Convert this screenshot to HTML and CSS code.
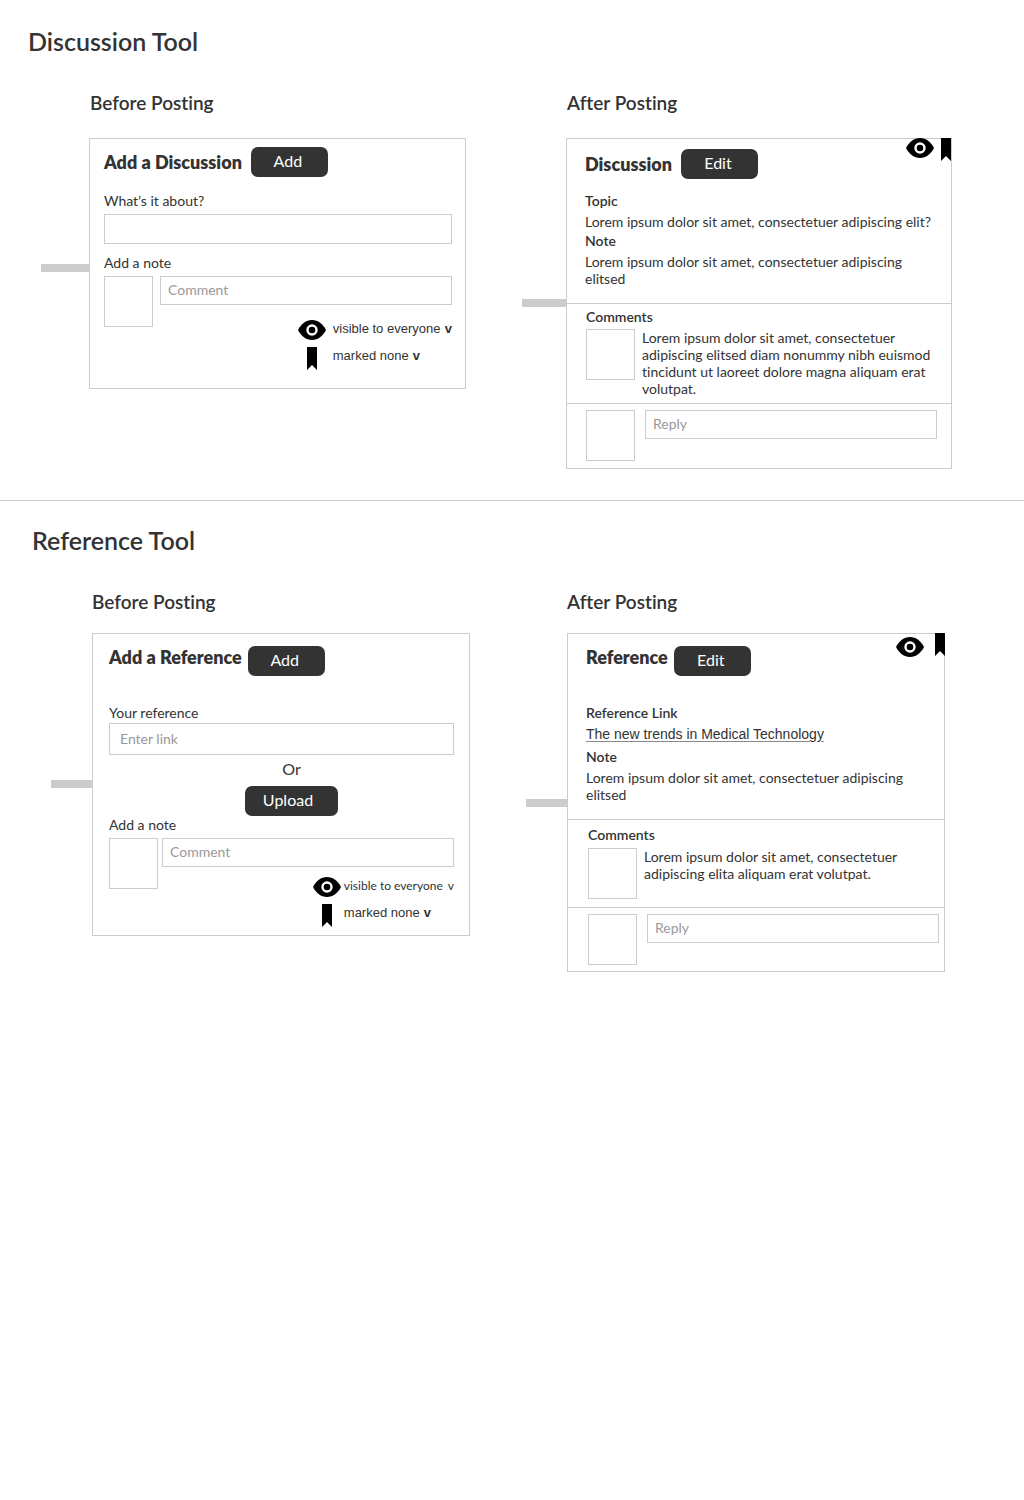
FILE: index.html
```html
<!DOCTYPE html>
<html lang="en">
<head>
<meta charset="utf-8">
<meta name="viewport" content="width=device-width, initial-scale=1">
<title>Discussion and Reference Tools</title>
<link rel="stylesheet" href="styles.css">
</head>
<body>
<svg class="sprite" aria-hidden="true">
  <symbol id="eye" viewBox="0 0 28 20">
    <path d="M0 10C3 4 8 0 14 0s11 4 14 10c-3 6-8 10-14 10S3 16 0 10z"/>
    <circle cx="14" cy="10" r="4.5" fill="none" stroke="#fff" stroke-width="2.4"/>
  </symbol>
  <symbol id="bookmark" viewBox="0 0 10 23">
    <path d="M0 0h10v23l-5-5-5 5z"/>
  </symbol>
</svg>

<section class="tool discussion">
  <h1 class="tool-title">Discussion Tool</h1>
  <div class="columns">
    <div class="column before">
      <h2 class="column-title">Before Posting</h2>
      <div class="thread">
        <div class="connector"></div>
        <form class="panel form-panel">
          <div class="panel-header">
            <h3 class="panel-title">Add a Discussion</h3>
            <button class="button" type="button">Add</button>
          </div>
          <label class="label" for="about">What’s it about?</label>
          <input class="input topic-input" id="about" type="text">
          <label class="label note-label" for="discussion-note">Add a note</label>
          <div class="note-row">
            <div class="avatar"></div>
            <div class="note-body">
              <input class="input" id="discussion-note" type="text" placeholder="Comment">
              <div class="options">
                <svg class="eye"><use href="#eye"/></svg>
                <div class="option">
                  <select class="select" aria-label="Visibility"><option>visible to everyone</option></select>
                  <span class="caret">v</span>
                </div>
                <svg class="bookmark"><use href="#bookmark"/></svg>
                <div class="option">
                  <select class="select" aria-label="Mark"><option>marked none</option></select>
                  <span class="caret">v</span>
                </div>
              </div>
            </div>
          </div>
        </form>
      </div>
    </div>

    <div class="column after">
      <h2 class="column-title">After Posting</h2>
      <div class="thread">
        <div class="connector"></div>
        <article class="panel">
          <div class="badges">
            <svg class="eye"><use href="#eye"/></svg>
            <svg class="bookmark"><use href="#bookmark"/></svg>
          </div>
          <div class="post">
            <div class="panel-header">
              <h3 class="panel-title">Discussion</h3>
              <button class="button" type="button">Edit</button>
            </div>
            <h4 class="term">Topic</h4>
            <p class="text">Lorem ipsum dolor sit amet, consectetuer adipiscing elit?</p>
            <h4 class="term">Note</h4>
            <p class="text">Lorem ipsum dolor sit amet, consectetuer adipiscing elitsed</p>
          </div>
          <div class="comments">
            <h4 class="term">Comments</h4>
            <div class="comment">
              <div class="avatar"></div>
              <p class="text">Lorem ipsum dolor sit amet, consectetuer adipiscing elitsed diam nonummy nibh euismod tincidunt ut laoreet dolore magna aliquam erat volutpat.</p>
            </div>
          </div>
          <div class="reply">
            <div class="avatar"></div>
            <input class="input" type="text" placeholder="Reply" aria-label="Reply">
          </div>
        </article>
      </div>
    </div>
  </div>
</section>

<section class="tool reference">
  <h1 class="tool-title">Reference Tool</h1>
  <div class="columns">
    <div class="column before">
      <h2 class="column-title">Before Posting</h2>
      <div class="thread">
        <div class="connector"></div>
        <form class="panel form-panel">
          <div class="panel-header">
            <h3 class="panel-title">Add a Reference</h3>
            <button class="button" type="button">Add</button>
          </div>
          <label class="label" for="link">Your reference</label>
          <input class="input link-input" id="link" type="text" placeholder="Enter link">
          <div class="upload">
            <span class="or">Or</span>
            <button class="button upload-button" type="button">Upload</button>
          </div>
          <label class="label note-label" for="reference-note">Add a note</label>
          <div class="note-row">
            <div class="avatar"></div>
            <div class="note-body">
              <input class="input" id="reference-note" type="text" placeholder="Comment">
              <div class="options">
                <svg class="eye"><use href="#eye"/></svg>
                <div class="option plain">
                  <select class="select" aria-label="Visibility"><option>visible to everyone</option></select>
                  <span class="caret">v</span>
                </div>
                <svg class="bookmark"><use href="#bookmark"/></svg>
                <div class="option">
                  <select class="select" aria-label="Mark"><option>marked none</option></select>
                  <span class="caret">v</span>
                </div>
              </div>
            </div>
          </div>
        </form>
      </div>
    </div>

    <div class="column after">
      <h2 class="column-title">After Posting</h2>
      <div class="thread">
        <div class="connector"></div>
        <article class="panel">
          <div class="badges">
            <svg class="eye"><use href="#eye"/></svg>
            <svg class="bookmark"><use href="#bookmark"/></svg>
          </div>
          <div class="post">
            <div class="panel-header">
              <h3 class="panel-title">Reference</h3>
              <button class="button" type="button">Edit</button>
            </div>
            <h4 class="term">Reference Link</h4>
            <p class="text"><a class="link" href="#">The new trends in Medical Technology</a></p>
            <h4 class="term">Note</h4>
            <p class="text">Lorem ipsum dolor sit amet, consectetuer adipiscing elitsed</p>
          </div>
          <div class="comments">
            <h4 class="term">Comments</h4>
            <div class="comment">
              <div class="avatar"></div>
              <p class="text">Lorem ipsum dolor sit amet, consectetuer adipiscing elita aliquam erat volutpat.</p>
            </div>
          </div>
          <div class="reply">
            <div class="avatar"></div>
            <input class="input" type="text" placeholder="Reply" aria-label="Reply">
          </div>
        </article>
      </div>
    </div>
  </div>
</section>
</body>
</html>
```
FILE: styles.css
```css
* {
  box-sizing: border-box;
}

body {
  margin: 0;
  background: #fff;
  color: #333;
  font: 14px/17px Lato, "Noto Sans", sans-serif;
  font-variant-ligatures: none;
}

h1, h2, h3, h4, p {
  margin: 0;
}

.sprite {
  position: absolute;
  width: 0;
  height: 0;
}

/* Tool sections */

.discussion {
  padding: 26px 72px 31px 41px;
  border-bottom: 1px solid #ccc;
}

.reference {
  padding: 24px 79px 31px 51px;
}

.tool-title {
  font-size: 25px;
  line-height: 30px;
  font-weight: 600;
}

.discussion .tool-title {
  margin: 0 0 36px -13px;
}

.reference .tool-title {
  margin: 0 0 36px -19px;
}

.columns {
  display: grid;
  gap: 56px;
  align-items: start;
}

.discussion .columns {
  grid-template-columns: minmax(0, 425fr) minmax(0, 430fr);
}

.reference .columns {
  grid-template-columns: minmax(0, 1fr) minmax(0, 1fr);
}

.column {
  --connector: 41px;
}

.discussion .before {
  --connector: 48px;
}

.discussion .after {
  --connector: 44px;
}

.column-title {
  padding-left: var(--connector);
  font-size: 19px;
  line-height: 22px;
  font-weight: 600;
}

.discussion .column-title {
  margin-bottom: 24px;
  padding-left: calc(var(--connector) + 1px);
}

.reference .column-title {
  margin-bottom: 20px;
}

.thread {
  display: flex;
  align-items: flex-start;
}

.connector {
  flex: none;
  width: var(--connector);
  height: 8px;
  background: #ccc;
}

.discussion .before .connector {
  margin-top: 126px;
}

.discussion .after .connector {
  margin-top: 161px;
}

.reference .before .connector {
  margin-top: 147px;
}

.reference .after .connector {
  margin-top: 166px;
}

/* Panels */

.panel {
  position: relative;
  flex: 1;
  min-width: 0;
  border: 1px solid #ccc;
}

.panel-header {
  display: flex;
  align-items: center;
  gap: 9px;
}

.panel-title {
  font-size: 18px;
  line-height: 22px;
  font-weight: 800;
}

.button {
  width: 77px;
  height: 30px;
  padding: 0 3px 2px 0;
  border: 0;
  border-radius: 7px;
  background: #333;
  color: #fff;
  font: 16px/20px Lato, "Noto Sans", sans-serif;
}

.avatar {
  flex: none;
  width: 49px;
  height: 51px;
  border: 1px solid #ccc;
}

.input {
  display: block;
  width: 100%;
  height: 29px;
  padding: 0 7px 2px;
  border: 1px solid #ccc;
  border-radius: 0;
  background: #fff;
  color: #333;
  font: inherit;
}

.input::placeholder {
  color: #999;
  opacity: 1;
}

.eye {
  display: block;
  width: 28px;
  height: 20px;
}

.bookmark {
  display: block;
  width: 10px;
  height: 23px;
}

/* Forms */

.form-panel {
  padding: 8px 13px 18px 14px;
}

.label {
  display: block;
  margin: 15px 0 5px;
}

.note-label {
  margin: 10px 0 5px;
}

.topic-input {
  height: 30px;
}

.note-row {
  display: flex;
  gap: 7px;
}

.note-body {
  flex: 1;
  min-width: 0;
}

.options {
  display: grid;
  grid-template-columns: 28px auto;
  justify-content: end;
  justify-items: center;
  gap: 7px;
  margin-top: 15px;
}

.option {
  display: flex;
  gap: 4px;
  justify-self: start;
  font: 13px/17px "Liberation Sans", Arial, sans-serif;
}

.select {
  height: 17px;
  padding: 0;
  border: 0;
  appearance: none;
  background: none;
  color: inherit;
  font: inherit;
}

.caret {
  font-weight: 700;
}

.plain,
.plain .caret {
  font: 12px/17px Lato, "Noto Sans", sans-serif;
}

.reference .panel-header {
  align-items: flex-start;
  gap: 6px;
}

.reference .form-panel {
  padding: 12px 15px 8px 16px;
}

.reference .label {
  margin: 28px 0 2px;
}

.reference .note-label {
  margin: 0 0 5px;
}

.reference .note-row {
  gap: 4px;
}

.reference .options {
  column-gap: 3px;
  margin-top: 10px;
}

.link-input {
  height: 32px;
  padding: 0 10px 2px;
}

.upload {
  display: flex;
  flex-direction: column;
  align-items: center;
  gap: 7px;
  padding: 4px 0 0 20px;
}

.or {
  font-size: 16px;
  line-height: 20px;
}

.upload-button {
  width: 93px;
  padding-right: 7px;
}

/* Posted panels */

.badges {
  position: absolute;
  top: -1px;
  right: 0;
  display: flex;
  gap: 7px;
}

.reference .badges {
  right: -1px;
  gap: 11px;
}

.reference .badges .eye {
  margin-top: 4px;
}

.post {
  padding: 10px 18px 16px;
}

.post .panel-header {
  margin-bottom: 13px;
}

.term {
  font-size: 14px;
  line-height: 17px;
  font-weight: 600;
}

.post .text {
  margin: 4px 0 2px;
}

.post .text:last-child {
  margin-bottom: 0;
}

.comments {
  padding: 4px 14px 6px 19px;
  border-top: 1px solid #ccc;
}

.comment {
  display: flex;
  gap: 7px;
  margin-top: 4px;
}

.reply {
  display: flex;
  gap: 10px;
  padding: 6px 14px 7px 19px;
  border-top: 1px solid #ccc;
}

.reference .post {
  padding-top: 12px;
}

.reference .post .panel-header {
  margin-bottom: 28px;
}

.reference .post .text {
  margin-bottom: 5px;
}

.reference .post .text:last-child {
  margin-bottom: 0;
}

.reference .comments {
  padding: 6px 14px 8px 20px;
}

.reference .comment {
  margin-top: 5px;
}

.reference .reply {
  padding: 6px 5px 6px 20px;
}

.link {
  color: #333;
  font: 14px/17px "Liberation Sans", Arial, sans-serif;
  text-decoration: underline;
  text-decoration-color: #888;
  text-underline-offset: 2px;
}
```
